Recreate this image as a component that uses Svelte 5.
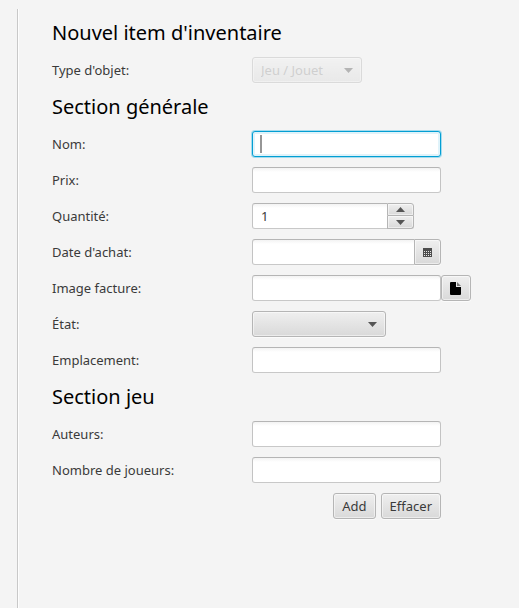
<script lang="ts">
  import { onMount } from 'svelte';

  // Form state
  let type = $state('Jeu / Jouet');
  let nom = $state('');
  let prix = $state('');
  let quantite = $state(1);
  let dateAchat = $state('');
  let facture = $state('');
  let etat = $state('');
  let emplacement = $state('');
  let auteurs = $state('');
  let joueurs = $state('');

  let nomInput: HTMLInputElement;
  let nomFocused = $state(false);

  const etats = ['', 'Neuf', 'Bon', 'Usé'];

  onMount(() => nomInput.focus());

  function step(delta: number) {
    quantite = Math.max(0, Number(quantite) + delta);
  }

  function effacer() {
    nom = '';
    prix = '';
    quantite = 1;
    dateAchat = '';
    facture = '';
    etat = '';
    emplacement = '';
    auteurs = '';
    joueurs = '';
    nomInput.focus();
  }
</script>

<main class="panel">
  <form class="form" onsubmit={(e) => e.preventDefault()}>
    <h2>Nouvel item d'inventaire</h2>

    <label for="type">Type d'objet:</label>
    <div class="select type">
      <select id="type" bind:value={type} disabled>
        <option>Jeu / Jouet</option>
      </select>
      <svg class="arrow" viewBox="0 0 9 5" aria-hidden="true"><path d="M0 0h9L4.500 5z" /></svg>
    </div>

    <h2>Section générale</h2>

    <label for="nom">Nom:</label>
    <div class="field">
      <input
        id="nom"
        class:empty={!nom}
        type="text"
        bind:this={nomInput}
        bind:value={nom}
        onfocus={() => (nomFocused = true)}
        onblur={() => (nomFocused = false)}
      />
      {#if nomFocused && !nom}
        <span class="caret"></span>
      {/if}
    </div>

    <label for="prix">Prix:</label>
    <input id="prix" type="text" bind:value={prix} />

    <label for="quantite">Quantité:</label>
    <div class="spinner">
      <input id="quantite" type="text" inputmode="numeric" bind:value={quantite} />
      <div class="steps">
        <button type="button" aria-label="Augmenter" onclick={() => step(1)}>
          <svg class="arrow" viewBox="0 0 9 5" aria-hidden="true"><path d="M0 5h9L4.500 0z" /></svg>
        </button>
        <button type="button" aria-label="Diminuer" onclick={() => step(-1)}>
          <svg class="arrow" viewBox="0 0 9 5" aria-hidden="true"><path d="M0 0h9L4.500 5z" /></svg>
        </button>
      </div>
    </div>

    <label for="date">Date d'achat:</label>
    <div class="date">
      <input id="date" type="text" bind:value={dateAchat} />
      <button type="button" aria-label="Choisir une date">
        <svg class="calendar" viewBox="0 -1 9 10" aria-hidden="true">
          <path class="sheet" d="M0 0h9v9H0z" />
          <path class="days" d="M1 3.500h7M1 5.500h7M1 7.500h7" />
        </svg>
      </button>
    </div>

    <label for="facture">Image facture:</label>
    <input id="facture" type="text" bind:value={facture} />
    <button class="file" type="button" aria-label="Choisir un fichier">
      <svg viewBox="0 -1 12 14" aria-hidden="true">
        <path d="M1 0h5v5h5v7a1 1 0 0 1-1 1H1a1 1 0 0 1-1-1V1a1 1 0 0 1 1-1z" />
        <path class="fold" d="M7 0l4 4H7z" />
      </svg>
    </button>

    <label for="etat">État:</label>
    <div class="select etat">
      <select id="etat" bind:value={etat}>
        {#each etats as e}
          <option value={e}>{e}</option>
        {/each}
      </select>
      <svg class="arrow" viewBox="0 0 9 5" aria-hidden="true"><path d="M0 0h9L4.500 5z" /></svg>
    </div>

    <label for="emplacement">Emplacement:</label>
    <input id="emplacement" type="text" bind:value={emplacement} />

    <h2>Section jeu</h2>

    <label for="auteurs">Auteurs:</label>
    <input id="auteurs" type="text" bind:value={auteurs} />

    <label for="joueurs">Nombre de joueurs:</label>
    <input id="joueurs" type="text" bind:value={joueurs} />

    <div class="actions">
      <button type="submit">Add</button>
      <button type="button" onclick={effacer}>Effacer</button>
    </div>
  </form>
</main>

<style>
  :global(body) {
    background: #f4f4f4;
  }

  :global(#app) {
    display: flow-root;
  }

  .panel {
    box-sizing: border-box;
    min-height: calc(100vh - 9px);
    margin: 9px 0 0 17px;
    padding: 10px 48px 10px 34px;
    border-left: 1px solid #c8c8c8;
    box-shadow: inset 1px 0 0 #fdfdfd;
    font-family: 'Noto Sans', sans-serif;
    font-size: 13px;
    color: #3a3a3a;
  }

  .form {
    display: grid;
    grid-template-columns: 200px minmax(0, 1fr) 30px;
    row-gap: 10px;
    align-items: center;
    max-width: 640px;
  }

  h2 {
    grid-column: 1 / -1;
    margin: 0;
    font-size: 20px;
    font-weight: 400;
    line-height: 28px;
    color: #000;
  }

  label {
    grid-column: 1;
    line-height: 26px;
  }

  input,
  select,
  button {
    box-sizing: border-box;
    height: 26px;
    margin: 0;
    border: 1px solid #b5b5b5;
    border-radius: 3px;
    font: inherit;
    color: #3a3a3a;
    outline: none;
  }

  input {
    width: 100%;
    min-width: 0;
    padding: 0 8px;
    border-color: #b5b5b5 #c3c3c3 #c8c8c8;
    background: linear-gradient(#f3f3f3, #fff 4px);
  }

  input:focus {
    border-color: #039ed3;
    background: #fff;
    box-shadow:
      0 0 0 1px #a5dcee,
      inset 0 0 0 2px #e0f3fa;
  }

  select,
  button {
    background: linear-gradient(#efefef, #d9d9d9);
    box-shadow:
      inset 0 0 0 1px rgba(255, 255, 255, 0.5),
      0 1px 0 #fbfbfb;
  }

  button {
    display: flex;
    align-items: center;
    justify-content: center;
    padding: 0 8px;
  }

  .field {
    position: relative;
    display: flex;
  }

  .empty {
    caret-color: transparent;
  }

  /* Thick caret drawn over the empty text box */
  .caret {
    position: absolute;
    top: 4px;
    left: 8px;
    width: 2px;
    height: 18px;
    background: #969696;
    pointer-events: none;
  }

  .select {
    position: relative;
    display: flex;
  }

  .type {
    width: 110px;
  }

  .etat {
    width: 134px;
  }

  select {
    width: 100%;
    padding: 0 28px 0 8px;
    appearance: none;
  }

  .arrow {
    width: 9px;
    height: 5px;
    fill: #555;
  }

  .select .arrow {
    position: absolute;
    top: 11px;
    right: 9px;
    pointer-events: none;
  }

  .select:has(select:disabled) {
    opacity: 0.4;
  }

  select:disabled {
    opacity: 1;
    color: #999;
  }

  .spinner {
    display: flex;
    width: 162px;
  }

  .spinner input,
  .date input {
    flex: 1;
    border-right: 0;
    border-radius: 3px 0 0 3px;
  }

  .steps {
    display: flex;
    flex-direction: column;
    width: 27px;
  }

  .steps button {
    height: 13px;
    padding: 0;
    border-radius: 0 3px 0 0;
    box-shadow: inset 0 0 0 1px rgba(255, 255, 255, 0.5);
  }

  .steps button + button {
    padding-top: 1px;
    border-top: 0;
    border-radius: 0 0 3px 0;
  }

  .date {
    display: flex;
  }

  .date button {
    width: 27px;
    padding: 0;
    border-radius: 0 3px 3px 0;
  }

  .calendar {
    width: 9px;
    height: 10px;
  }

  .sheet {
    fill: #4d4d4d;
  }

  .days {
    stroke: #e6e6e6;
    stroke-dasharray: 1 1;
  }

  .file {
    padding: 0;
  }

  .file svg {
    width: 12px;
    height: 14px;
  }

  .fold {
    fill: #777;
  }

  .actions {
    grid-column: 2;
    display: flex;
    justify-content: flex-end;
    gap: 5px;
  }
</style>
